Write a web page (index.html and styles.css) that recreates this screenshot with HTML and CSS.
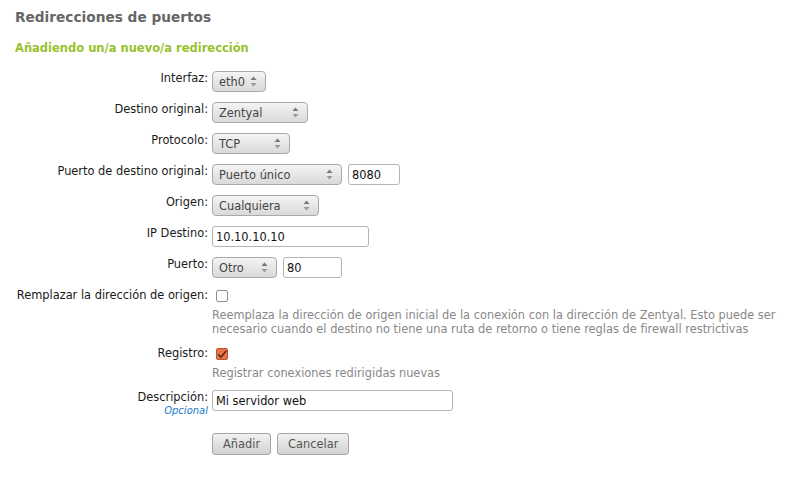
FILE: index.html
```html
<!DOCTYPE html>
<html lang="es">
<head>
<meta charset="utf-8">
<title>Redirecciones de puertos</title>
<link rel="stylesheet" href="styles.css">
</head>
<body>
<div class="page">
  <h1 class="title">Redirecciones de puertos</h1>
  <h2 class="subtitle">Añadiendo un/a nuevo/a redirección</h2>

  <form class="form">
    <div class="field">
      <label class="label">Interfaz:</label>
      <div class="cell">
        <span class="select" style="width:54px"><span class="sel-text">eth0</span><svg class="arrows" width="7" height="11" viewBox="0 0 7 11"><path d="M0.5 4 L3.5 0.5 L6.5 4 Z" fill="#777"/><path d="M0.5 7 L3.5 10.5 L6.5 7 Z" fill="#999"/></svg></span>
      </div>
    </div>

    <div class="field">
      <label class="label">Destino original:</label>
      <div class="cell">
        <span class="select" style="width:96px"><span class="sel-text">Zentyal</span><svg class="arrows" width="7" height="11" viewBox="0 0 7 11"><path d="M0.5 4 L3.5 0.5 L6.5 4 Z" fill="#777"/><path d="M0.5 7 L3.5 10.5 L6.5 7 Z" fill="#999"/></svg></span>
      </div>
    </div>

    <div class="field">
      <label class="label">Protocolo:</label>
      <div class="cell">
        <span class="select" style="width:78px"><span class="sel-text">TCP</span><svg class="arrows" width="7" height="11" viewBox="0 0 7 11"><path d="M0.5 4 L3.5 0.5 L6.5 4 Z" fill="#777"/><path d="M0.5 7 L3.5 10.5 L6.5 7 Z" fill="#999"/></svg></span>
      </div>
    </div>

    <div class="field">
      <label class="label">Puerto de destino original:</label>
      <div class="cell row">
        <span class="select" style="width:130px"><span class="sel-text">Puerto único</span><svg class="arrows" width="7" height="11" viewBox="0 0 7 11"><path d="M0.5 4 L3.5 0.5 L6.5 4 Z" fill="#777"/><path d="M0.5 7 L3.5 10.5 L6.5 7 Z" fill="#999"/></svg></span>
        <input class="text" type="text" value="8080" style="width:52px">
      </div>
    </div>

    <div class="field">
      <label class="label">Origen:</label>
      <div class="cell">
        <span class="select" style="width:107px"><span class="sel-text">Cualquiera</span><svg class="arrows" width="7" height="11" viewBox="0 0 7 11"><path d="M0.5 4 L3.5 0.5 L6.5 4 Z" fill="#777"/><path d="M0.5 7 L3.5 10.5 L6.5 7 Z" fill="#999"/></svg></span>
      </div>
    </div>

    <div class="field">
      <label class="label">IP Destino:</label>
      <div class="cell">
        <input class="text" type="text" value="10.10.10.10" style="width:157px">
      </div>
    </div>

    <div class="field">
      <label class="label">Puerto:</label>
      <div class="cell row">
        <span class="select" style="width:65px"><span class="sel-text">Otro</span><svg class="arrows" width="7" height="11" viewBox="0 0 7 11"><path d="M0.5 4 L3.5 0.5 L6.5 4 Z" fill="#777"/><path d="M0.5 7 L3.5 10.5 L6.5 7 Z" fill="#999"/></svg></span>
        <input class="text" type="text" value="80" style="width:59px">
      </div>
    </div>

    <div class="field">
      <label class="label">Remplazar la dirección de origen:</label>
      <div class="cell">
        <div class="check-wrap"><span class="checkbox"></span></div>
        <p class="help">Reemplaza la dirección de origen inicial de la conexión con la dirección de Zentyal. Esto puede ser necesario cuando el destino no tiene una ruta de retorno o tiene reglas de firewall restrictivas</p>
      </div>
    </div>

    <div class="field">
      <label class="label">Registro:</label>
      <div class="cell">
        <div class="check-wrap"><span class="checkbox checked"><svg width="10" height="9" viewBox="0 0 10 9"><path d="M1.2 4.2 L4 7.2 L9.2 0.8" fill="none" stroke="#5a2a14" stroke-width="1.6"/></svg></span></div>
        <p class="help">Registrar conexiones redirigidas nuevas</p>
      </div>
    </div>

    <div class="field">
      <div class="label">
        <label>Descripción:</label>
        <span class="optional">Opcional</span>
      </div>
      <div class="cell">
        <input class="text" type="text" value="Mi servidor web" style="width:241px">
      </div>
    </div>

    <div class="field buttons-field">
      <div class="label"></div>
      <div class="cell row buttons">
        <button type="button" class="btn">Añadir</button>
        <button type="button" class="btn">Cancelar</button>
      </div>
    </div>
  </form>
</div>
</body>
</html>
```

FILE: styles.css
```css
* { box-sizing: border-box; }

body {
  margin: 0;
  background: #ffffff;
  font-family: "DejaVu Sans", Verdana, sans-serif;
  font-size: 11.4px;
  color: #222;
}

.page {
  padding-top: 9px;
}

.title {
  margin: 0 0 0 15px;
  font-size: 13.7px;
  line-height: 17px;
  font-weight: bold;
  color: #666666;
}

.subtitle {
  margin: 14px 0 0 15px;
  font-size: 11.5px;
  line-height: 17px;
  font-weight: bold;
  color: #99c12e;
}

.form {
  margin-top: 14px;
  display: flex;
  flex-direction: column;
  gap: 10px;
}

.field {
  display: grid;
  grid-template-columns: 208px 1fr;
  column-gap: 4px;
  align-items: start;
}

.label {
  text-align: right;
  line-height: 14px;
  color: #1a1a1a;
  display: flex;
  flex-direction: column;
  align-items: flex-end;
  white-space: nowrap;
}

.optional {
  font-style: italic;
  font-size: 10px;
  line-height: 13px;
  color: #1a7ac9;
}

.cell {
  display: flex;
  flex-direction: column;
  align-items: flex-start;
}

.cell.row {
  flex-direction: row;
  align-items: center;
  gap: 6px;
}

.select {
  position: relative;
  display: inline-flex;
  align-items: center;
  height: 21px;
  padding: 0 16px 0 6px;
  border: 1px solid #a9a9a9;
  border-radius: 4px;
  background: linear-gradient(#f4f4f4, #d9d9d9);
  color: #444;
}

.sel-text {
  padding-top: 1px;
  white-space: nowrap;
}

.arrows {
  position: absolute;
  right: 8px;
  top: 4px;
}

.text {
  height: 21px;
  padding: 0 3px;
  border: 1px solid #b4b4b4;
  border-radius: 3px;
  background: #fff;
  font-family: "DejaVu Sans", Verdana, sans-serif;
  font-size: 11.4px;
  color: #111;
  margin: 0;
}

.check-wrap {
  height: 14px;
  padding-top: 2px;
  padding-left: 4px;
}

.checkbox {
  display: flex;
  align-items: center;
  justify-content: center;
  width: 12px;
  height: 12px;
  border: 1px solid #8e8e8e;
  border-radius: 2px;
  background: #fff;
}

.checkbox.checked {
  background: #ea7547;
  border-color: #b9532b;
}

.help {
  margin: 6px 0 0 0;
  max-width: 580px;
  line-height: 14px;
  color: #888888;
}

.buttons-field {
  margin-top: 6px;
}

.buttons {
  gap: 7px;
}

.btn {
  height: 22px;
  padding: 0 10px;
  border: 1px solid #a6a6a6;
  border-radius: 3px;
  background: linear-gradient(#f1f1f1, #d2d2d2);
  font-family: "DejaVu Sans", Verdana, sans-serif;
  font-size: 11.4px;
  color: #555;
  margin: 0;
}
```
